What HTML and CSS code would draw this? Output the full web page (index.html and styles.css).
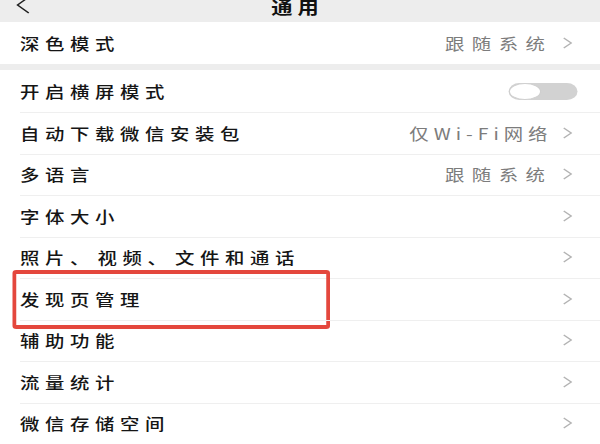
FILE: index.html
```html
<!DOCTYPE html>
<html lang="zh">
<head>
<meta charset="utf-8">
<link rel="stylesheet" href="styles.css">
</head>
<body>
<div class="page">
  <header class="topbar">
    <div class="topbar-inner">
      <svg class="back" width="14" height="20" viewBox="0 0 14 20"><polyline points="11,2 2,10 11,18" fill="none" stroke="#222" stroke-width="1.3"/></svg>
      <span class="title">通用</span>
    </div>
  </header>
  <section class="group">
    <div class="row first">
      <span class="label">深色模式</span>
      <span class="value">跟随系统</span>
      <svg class="chev" width="8" height="14" viewBox="0 0 8 14"><polyline points="1,2 7,7 1,12" fill="none" stroke="#b3b3b3" stroke-width="1.2"/></svg>
    </div>
  </section>
  <section class="group">
    <div class="row first">
      <span class="label">开启横屏模式</span>
      <span class="toggle"><span class="knob"></span></span>
    </div>
    <div class="row">
      <span class="label">自动下载微信安装包</span>
      <span class="value value-compact">仅Wi-Fi网络</span>
      <svg class="chev" width="8" height="14" viewBox="0 0 8 14"><polyline points="1,2 7,7 1,12" fill="none" stroke="#b3b3b3" stroke-width="1.2"/></svg>
    </div>
    <div class="row">
      <span class="label">多语言</span>
      <span class="value">跟随系统</span>
      <svg class="chev" width="8" height="14" viewBox="0 0 8 14"><polyline points="1,2 7,7 1,12" fill="none" stroke="#b3b3b3" stroke-width="1.2"/></svg>
    </div>
    <div class="row">
      <span class="label">字体大小</span>
      <svg class="chev" width="8" height="14" viewBox="0 0 8 14"><polyline points="1,2 7,7 1,12" fill="none" stroke="#b3b3b3" stroke-width="1.2"/></svg>
    </div>
    <div class="row">
      <span class="label">照片<span class="sep">、</span>视频<span class="sep">、</span>文件和通话</span>
      <svg class="chev" width="8" height="14" viewBox="0 0 8 14"><polyline points="1,2 7,7 1,12" fill="none" stroke="#b3b3b3" stroke-width="1.2"/></svg>
    </div>
    <div class="row">
      <span class="label">发现页管理</span>
      <svg class="chev" width="8" height="14" viewBox="0 0 8 14"><polyline points="1,2 7,7 1,12" fill="none" stroke="#b3b3b3" stroke-width="1.2"/></svg>
      <span class="highlight"></span>
    </div>
    <div class="row">
      <span class="label">辅助功能</span>
      <svg class="chev" width="8" height="14" viewBox="0 0 8 14"><polyline points="1,2 7,7 1,12" fill="none" stroke="#b3b3b3" stroke-width="1.2"/></svg>
    </div>
    <div class="row">
      <span class="label">流量统计</span>
      <svg class="chev" width="8" height="14" viewBox="0 0 8 14"><polyline points="1,2 7,7 1,12" fill="none" stroke="#b3b3b3" stroke-width="1.2"/></svg>
    </div>
    <div class="row">
      <span class="label">微信存储空间</span>
      <svg class="chev" width="8" height="14" viewBox="0 0 8 14"><polyline points="1,2 7,7 1,12" fill="none" stroke="#b3b3b3" stroke-width="1.2"/></svg>
    </div>
  </section>
</div>
</body>
</html>
```
FILE: styles.css
```css
* { box-sizing: border-box; }
html, body { margin: 0; padding: 0; }
body {
  background: #ededed;
  font-family: "Noto Sans CJK SC", "Noto Sans", sans-serif;
  color: #151515;
  width: 600px;
  height: 444px;
  overflow: hidden;
}
/* the source screenshot is stretched horizontally: lay out at 480px, stretch by 1.25 */
.page {
  width: 480px;
  display: flex;
  flex-direction: column;
  transform: scaleX(1.25);
  transform-origin: 0 0;
}
.topbar {
  height: 22px;
  overflow: hidden;
  background: #ededed;
}
.topbar-inner {
  position: relative;
  height: 30px;
  margin-top: -9px;
  display: flex;
  align-items: center;
  justify-content: center;
}
.back { position: absolute; left: 12px; top: 4px; }
.title {
  font-size: 17px;
  letter-spacing: 4px;
  margin-right: 4px;
  font-weight: 700;
  color: #111;
}
.group {
  background: #fff;
  display: flex;
  flex-direction: column;
}
.group + .group { margin-top: 6px; }
.row {
  position: relative;
  height: 41.5px;
  display: flex;
  align-items: center;
  padding: 0 22px 0 16px;
}
.row.first { height: 42px; }
.row + .row::before {
  content: "";
  position: absolute;
  left: 16px;
  right: 0;
  top: 0;
  height: 1px;
  background: #efefef;
}
.label {
  flex: 1;
  font-size: 15.5px;
  letter-spacing: 4.5px;
  font-weight: 500;
  white-space: nowrap;
}
.sep { margin-right: 2px; }
.value {
  font-size: 15.5px;
  letter-spacing: 6px;
  color: #7c7c7c;
  margin-right: 8px;
  white-space: nowrap;
}
.value-compact { letter-spacing: 4px; }
.chev { flex: none; }
.toggle {
  position: relative;
  width: 55px;
  height: 17px;
  border-radius: 9px;
  background: #d2d2d2;
  margin-right: -4px;
}
.knob {
  position: absolute;
  left: 0;
  top: 0;
  width: 26px;
  height: 17px;
  border-radius: 50%;
  background: #fff;
  border: 1.5px solid #cfcfcf;
}
.highlight {
  position: absolute;
  left: 9.6px;
  top: -8px;
  width: 254px;
  height: 59px;
  border: 4px solid #e4473d;
  border-left-width: 3.2px;
  border-right-width: 3.2px;
  border-radius: 3px;
}
```
